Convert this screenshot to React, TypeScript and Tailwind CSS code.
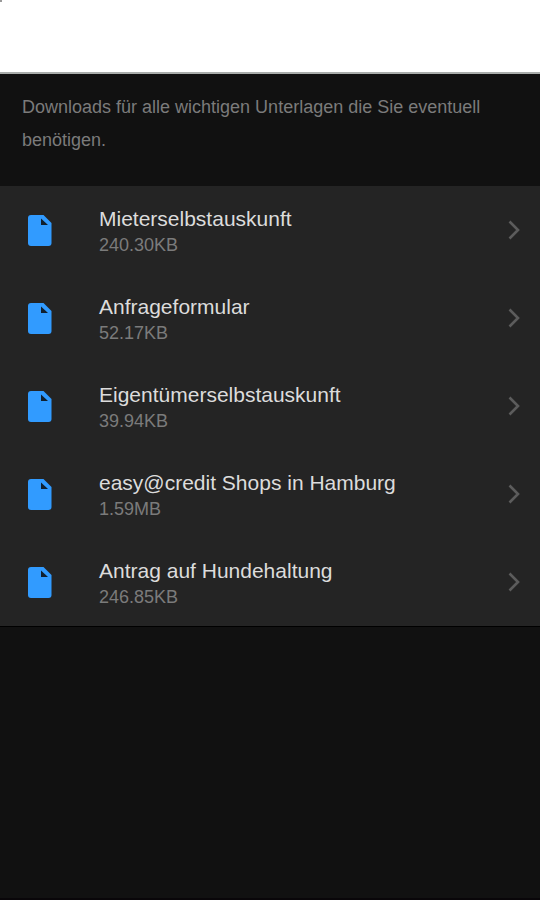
interface Download {
  title: string;
  size: string;
}

const downloads: Download[] = [
  { title: "Mieterselbstauskunft", size: "240.30KB" },
  { title: "Anfrageformular", size: "52.17KB" },
  { title: "Eigentümerselbstauskunft", size: "39.94KB" },
  { title: "easy@credit Shops in Hamburg", size: "1.59MB" },
  { title: "Antrag auf Hundehaltung", size: "246.85KB" },
];

function FileIcon() {
  return (
    <svg className="h-8 w-6 shrink-0" viewBox="0 0 24 32" aria-hidden="true">
      <path
        d="M3 1h12.5L23.5 9v20a3 3 0 0 1-3 3H3a3 3 0 0 1-3-3v-25a3 3 0 0 1 3-3z"
        fill="#319bff"
      />
      <path d="M13 4.5v6.5H20z" fill="#10202f" />
    </svg>
  );
}

function ChevronIcon() {
  return (
    <svg className="h-5 w-3 shrink-0" viewBox="0 0 12 20" fill="none" aria-hidden="true">
      <path d="M1.5 1.5L10 10l-8.5 8.5" stroke="#5c5c5c" strokeWidth="2.6" />
    </svg>
  );
}

function DownloadRow({ title, size }: Download) {
  return (
    <li>
      <a href="#" className="flex h-[88px] items-center pl-7 pr-5">
        <FileIcon />
        <span className="ml-[47px] flex min-w-0 flex-1 flex-col pt-1">
          <span className="text-[21px] leading-[26px] text-[#dcdcdc]">{title}</span>
          <span className="text-[18px] leading-[26px] text-[#7b7b7b]">{size}</span>
        </span>
        <ChevronIcon />
      </a>
    </li>
  );
}

export default function App() {
  return (
    <div className="flex min-h-screen flex-col border-b-2 border-[#090609] bg-[#111111] font-['Liberation_Sans',Arial,sans-serif]">
      <header className="h-[74px] border-b-2 border-[#a9adab] bg-white">
        <div className="h-0.5 w-0.5 bg-[#999999]" />
      </header>
      <main>
        <p className="px-[22px] pb-[29px] pt-[17px] text-[18px] leading-[33px] text-[#7b7b7b]">
          Downloads für alle wichtigen Unterlagen die Sie eventuell benötigen.
        </p>
        <ul className="border-b border-black bg-[#242424]">
          {downloads.map((item) => (
            <DownloadRow key={item.title} {...item} />
          ))}
        </ul>
      </main>
    </div>
  );
}
